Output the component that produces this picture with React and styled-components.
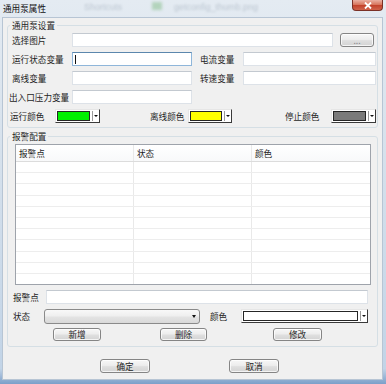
import React from 'react';
import styled, { createGlobalStyle } from 'styled-components';

const GlobalStyle = createGlobalStyle`
  html, body { margin: 0; padding: 0; }
  body {
    font-family: "Noto Sans CJK SC", "Liberation Sans", sans-serif;
    font-size: 8.6px;
    color: #1e1e1e;
    background: #fff;
  }
`;

const Window = styled.div`
  width: 386px;
  height: 384px;
  display: flex;
  flex-direction: column;
  overflow: hidden;
  background: linear-gradient(to bottom, #e4ebf2 0%, #d6e1ec 40%, #c2d4e7 96%, #7c9fc9 100%);
`;

const TitleBar = styled.div`
  height: 17px;
  flex: none;
  display: flex;
  align-items: flex-start;
`;

const Title = styled.span`
  padding: 2px 0 0 3px;
  line-height: 12px;
  color: #111;
`;

const Backdrop = styled.span`
  margin: 2px 0 0 ${p => p.$ml}px;
  line-height: 10px;
  font-family: "Liberation Sans", sans-serif;
  font-size: 9px;
  color: rgba(70, 90, 110, 0.25);
  filter: blur(1.3px);
  white-space: nowrap;
`;

const BackdropIcon = styled.span`
  width: 10px;
  height: 8px;
  margin: 2px 0 0 ${p => p.$ml}px;
  background: rgba(90, 170, 90, 0.35);
  filter: blur(1.5px);
`;

const CloseButton = styled.div`
  width: 31px;
  height: 11px;
  margin: 0 3px 0 auto;
  box-sizing: border-box;
  border: 1px solid #7a3026;
  border-top: none;
  border-radius: 0 0 4px 4px;
  background: linear-gradient(to bottom, #eab0a2 0%, #d8775f 45%, #c2432c 55%, #d0644c 100%);
  display: flex;
  align-items: center;
  justify-content: center;
`;

const Client = styled.div`
  flex: 1;
  margin: 0 3px 4px 2px;
  padding: 1px 4px 0 4px;
  background: #f0f0f0;
  border: 1px solid #b7c5d4;
  display: flex;
  flex-direction: column;
`;

const Group = styled.fieldset`
  margin: ${p => p.$mt}px 0 0 0;
  padding: 2px ${p => p.$pr}px ${p => p.$pb}px ${p => p.$pl}px;
  border: 1px solid #d5dfe5;
  border-radius: 3px;
  min-width: 0;
  display: flex;
  flex-direction: column;
  gap: 5px;
`;

const Legend = styled.legend`
  margin-left: ${p => p.$ml}px;
  padding: 0 2px;
  line-height: 12px;
`;

const Row = styled.div`
  display: flex;
  align-items: center;
  height: 14px;
  margin: ${p => p.$mt || 0}px 0 0 ${p => p.$shift || 0}px;
`;

const Label = styled.span`
  flex: none;
  width: ${p => p.$w}px;
  margin-left: ${p => p.$ml || 0}px;
  line-height: 14px;
  white-space: nowrap;
`;

const TextBox = styled.div`
  flex: none;
  width: ${p => p.$w}px;
  height: 14px;
  box-sizing: border-box;
  padding-left: 2px;
  display: flex;
  align-items: center;
  background: #fff;
  border: 1px solid ${p => (p.$focused ? '#8fb6da' : '#dde2e8')};
  border-top-color: ${p => (p.$focused ? '#5b87ad' : '#c3c9d0')};
`;

const Caret = styled.span`
  width: 1px;
  height: 9px;
  background: #111;
`;

const Button = styled.button`
  flex: none;
  width: ${p => p.$w}px;
  height: ${p => p.$h || 13}px;
  margin-left: ${p => p.$ml || 0}px;
  padding: 0;
  box-sizing: border-box;
  border: 1px solid #858585;
  border-radius: 3px;
  background: linear-gradient(to bottom, #f7f7f7 0%, #ededed 45%, #dfdfdf 55%, #d3d3d3 100%);
  box-shadow: inset 0 0 0 1px rgba(255, 255, 255, 0.75);
  font: inherit;
  color: ${p => (p.$dim ? '#8a8a8a' : '#1e1e1e')};
  line-height: 11px;
`;

const ColorCombo = styled.div`
  flex: none;
  width: ${p => p.$w}px;
  height: 14px;
  margin-left: ${p => p.$ml || 0}px;
  box-sizing: border-box;
  display: flex;
  padding: 1px 0 1px 1px;
  background: #fff;
  border-top: 1px solid #e6e6e6;
  border-left: 1px solid #e6e6e6;
  border-right: 1px solid #3a3a3a;
  border-bottom: 1px solid #3a3a3a;
`;

const Swatch = styled.div`
  flex: 1;
  border: 1px solid #262626;
  background: ${p => p.$c};
`;

const DropArrow = styled.div`
  flex: none;
  width: 6px;
  margin-left: 2px;
  border-left: 1px solid #9a9a9a;
  display: flex;
  align-items: center;
  justify-content: center;

  &::after {
    content: '';
    border-left: 2px solid transparent;
    border-right: 2px solid transparent;
    border-top: 2px solid #111;
  }
`;

const Select = styled.div`
  flex: none;
  width: ${p => p.$w}px;
  height: 15px;
  box-sizing: border-box;
  padding-right: 3px;
  display: flex;
  align-items: center;
  justify-content: flex-end;
  border: 1px solid #8a8a8a;
  border-radius: 3px;
  background: linear-gradient(to bottom, #f8f8f8 0%, #efefef 45%, #e3e3e3 55%, #d9d9d9 100%);

  &::after {
    content: '';
    border-left: 2px solid transparent;
    border-right: 2px solid transparent;
    border-top: 3px solid #111;
  }
`;

const ListView = styled.div`
  flex: none;
  height: 141px;
  margin-left: 2px;
  box-sizing: border-box;
  border: 1px solid #9ea3ab;
  background: #fff;
  overflow: hidden;
`;

const ListRow = styled.div`
  display: grid;
  grid-template-columns: 118px 118px 1fr;
  height: ${p => (p.$head ? 17 : 11.2)}px;
  box-sizing: border-box;
  border-bottom: 1px solid ${p => (p.$head ? '#dcdcdc' : '#ededed')};
  background: ${p => (p.$head ? 'linear-gradient(to bottom, #fff, #f8f9fa)' : '#fff')};
`;

const Cell = styled.div`
  padding-left: 3px;
  line-height: 16px;
  border-right: 1px solid #e9e9e9;

  &:last-child {
    border-right: none;
  }
`;

const Footer = styled.div`
  display: flex;
  gap: 79px;
  margin-top: 12px;
  padding-left: 93px;
`;

const columns = ['报警点', '状态', '颜色'];
const rows = Array.from({ length: 11 });

const App = () => (
  <>
    <GlobalStyle />
    <Window>
      <TitleBar>
        <Title>通用泵属性</Title>
        <Backdrop $ml={38}>Shortcuts</Backdrop>
        <BackdropIcon $ml={30} />
        <Backdrop $ml={12}>getconfig_thumb.png</Backdrop>
        <CloseButton>
          <svg width="8" height="7" viewBox="0 0 8 7">
            <path d="M1 0.5 L7 6.5 M7 0.5 L1 6.5" stroke="#fff" strokeWidth="1.8" />
          </svg>
        </CloseButton>
      </TitleBar>

      <Client>
        <Group $mt={0} $pl={4} $pr={1} $pb={4}>
          <Legend $ml={-2}>通用泵设置</Legend>
          <Row>
            <Label $w={60}>选择图片</Label>
            <TextBox $w={261} />
            <Button $w={34} $ml={7} $h={14} $dim>...</Button>
          </Row>
          <Row>
            <Label $w={60}>运行状态变量</Label>
            <TextBox $w={120} $focused><Caret /></TextBox>
            <Label $w={43} $ml={8}>电流变量</Label>
            <TextBox $w={133} />
          </Row>
          <Row>
            <Label $w={60}>离线变量</Label>
            <TextBox $w={120} />
            <Label $w={43} $ml={8}>转速变量</Label>
            <TextBox $w={133} />
          </Row>
          <Row $shift={-3}>
            <Label $w={63}>出入口压力变量</Label>
            <TextBox $w={120} />
          </Row>
          <Row $shift={-2}>
            <Label $w={45}>运行颜色</Label>
            <ColorCombo $w={45}><Swatch $c="#00f000" /><DropArrow /></ColorCombo>
            <Label $w={38} $ml={50}>离线颜色</Label>
            <ColorCombo $w={44}><Swatch $c="#ffff00" /><DropArrow /></ColorCombo>
            <Label $w={46} $ml={53}>停止颜色</Label>
            <ColorCombo $w={45}><Swatch $c="#7a7a7a" /><DropArrow /></ColorCombo>
          </Row>
        </Group>

        <Group $mt={2} $pl={5} $pr={6} $pb={5}>
          <Legend $ml={-3}>报警配置</Legend>
          <ListView>
            <ListRow $head>
              {columns.map(c => <Cell key={c}>{c}</Cell>)}
            </ListRow>
            {rows.map((_, i) => (
              <ListRow key={i}>
                <Cell />
                <Cell />
                <Cell />
              </ListRow>
            ))}
          </ListView>
          <Row>
            <Label $w={33}>报警点</Label>
            <TextBox $w={322} />
          </Row>
          <Row>
            <Label $w={31}>状态</Label>
            <Select $w={156} />
            <Label $w={31} $ml={10}>颜色</Label>
            <ColorCombo $w={127}><Swatch $c="#fff" /><DropArrow /></ColorCombo>
          </Row>
          <Row $mt={-1}>
            <Button $w={48} $ml={40}>新增</Button>
            <Button $w={47} $ml={59}>删除</Button>
            <Button $w={49} $ml={66}>修改</Button>
          </Row>
        </Group>

        <Footer>
          <Button $w={50} $h={14}>确定</Button>
          <Button $w={50} $h={14}>取消</Button>
        </Footer>
      </Client>
    </Window>
  </>
);

export default App;
